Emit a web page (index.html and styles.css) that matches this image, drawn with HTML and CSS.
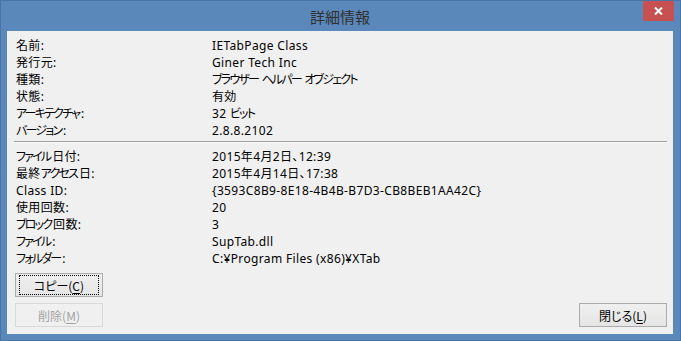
FILE: index.html
```html
<!DOCTYPE html>
<html lang="ja">
<head>
  <meta charset="UTF-8" />
  <title>詳細情報</title>
  <link rel="stylesheet" href="styles.css">
</head>
<body>
  <div class="window">
    <div class="titlebar">
      <span class="title">詳細情報</span>
      <button class="close" title="閉じる">
        <svg width="9" height="8" viewBox="0 0 9 8">
          <path d="M1 0.5 L8 7.5 M8 0.5 L1 7.5" stroke="#fff" stroke-width="2" fill="none"/>
        </svg>
      </button>
    </div>

    <div class="client">
      <div class="props">
        <span class="key">名前:</span><span class="val">IETabPage Class</span>
        <span class="key">発行元:</span><span class="val">Giner Tech Inc</span>
        <span class="key">種類:</span><span class="val"><span class="k">ブラウザー</span> <span class="k">ヘルパー</span> <span class="k">オブジェクト</span></span>
        <span class="key">状態:</span><span class="val">有効</span>
        <span class="key"><span class="k ke">アーキテクチャ</span>:</span><span class="val">32 <span class="k">ビット</span></span>
        <span class="key"><span class="k ke">バージョン</span>:</span><span class="val">2.8.8.2102</span>
      </div>

      <div class="sep"></div>

      <div class="props">
        <span class="key"><span class="k ke">ファイル</span>日付:</span><span class="val">2015年4月2日、12:39</span>
        <span class="key">最終<span class="k ke">アクセス</span>日:</span><span class="val">2015年4月14日、17:38</span>
        <span class="key">Class ID:</span><span class="val">{3593C8B9-8E18-4B4B-B7D3-CB8BEB1AA42C}</span>
        <span class="key">使用回数:</span><span class="val">20</span>
        <span class="key"><span class="k ke">ブロック</span>回数:</span><span class="val">3</span>
        <span class="key"><span class="k ke">ファイル</span>:</span><span class="val">SupTab.dll</span>
        <span class="key"><span class="k ke">フォルダー</span>:</span><span class="val">C:¥Program Files (x86)¥XTab</span>
      </div>

      <div class="actions">
        <div class="left-buttons">
          <button class="btn focused">コピー(<u>C</u>)</button>
          <button class="btn" disabled>削除(<u>M</u>)</button>
        </div>
        <button class="btn">閉じる(<u>L</u>)</button>
      </div>
    </div>
  </div>
</body>
</html>
```

FILE: styles.css
```css
body {
  margin: 0;
  font-family: "Noto Sans", "Noto Sans CJK JP", sans-serif;
  font-size: 12px;
  color: #000;
  background: #fff;
}

.window {
  width: 681px;
  height: 341px;
  box-sizing: border-box;
  border: 1px solid #4a74a6;
  background: #5b88bb;
  padding: 0 7px 7px 6px;
  display: flex;
  flex-direction: column;
}

.titlebar {
  position: relative;
  height: 30px;
  flex: none;
  display: flex;
  align-items: center;
  justify-content: center;
}

.title {
  font-family: "Noto Sans CJK JP", sans-serif;
  font-size: 15px;
  color: #303030;
  padding-top: 1px;
}

.close {
  position: absolute;
  top: 0;
  right: -1px;
  width: 31px;
  height: 20px;
  border: none;
  padding: 0;
  background: #c75050;
  display: flex;
  align-items: center;
  justify-content: center;
}

.client {
  flex: 1;
  background: #f0f0f0;
  padding: 6px 6px 7px 8px;
  display: flex;
  flex-direction: column;
}

.props {
  display: grid;
  grid-template-columns: 197px 1fr;
  line-height: 17px;
  letter-spacing: 0.35px;
  font-feature-settings: "palt";
}

.key {
  padding-left: 1px;
}

/* katakana runs: Meiryo UI draws these narrower than Noto CJK */
.k {
  letter-spacing: -1.8px;
}

.ke {
  margin-right: 1.8px;
}

.sep {
  height: 1px;
  background: #a0a0a0;
  border-bottom: 1px solid #fcfcfc;
  margin: 2px 0 5px -1px;
}

.actions {
  display: flex;
  justify-content: space-between;
  align-items: flex-end;
  margin-top: 6px;
}

.left-buttons {
  display: flex;
  flex-direction: column;
  gap: 6px;
}

.btn {
  position: relative;
  width: 88px;
  height: 24px;
  padding: 0;
  font-family: "Noto Sans CJK JP", sans-serif;
  font-size: 12px;
  font-feature-settings: "palt";
  color: #000;
  border: 1px solid #acacac;
  background: linear-gradient(#f0f0f0, #e5e5e5);
}

.btn u {
  text-underline-offset: 2px;
}

.btn.focused::after {
  content: "";
  position: absolute;
  top: 1px;
  left: 3px;
  right: 3px;
  bottom: 1px;
  border: 1px dotted #000;
}

.btn:disabled {
  color: #a3a3a3;
  border-color: #d9d9d9;
  background: #f0f0f0;
}
```
